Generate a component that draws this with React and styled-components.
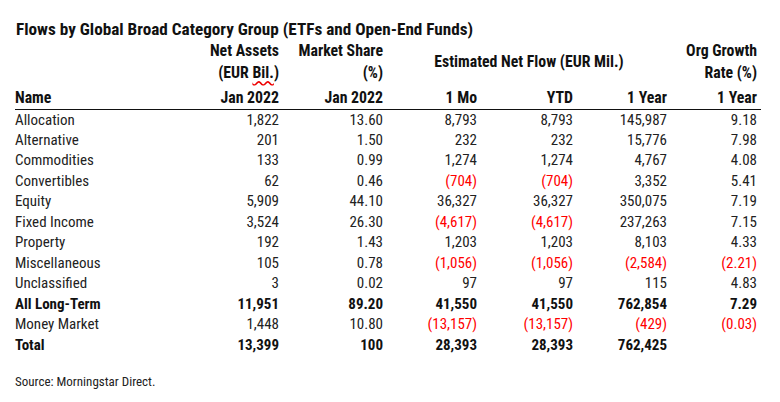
import React from 'react';
import styled, { createGlobalStyle } from 'styled-components';

const GlobalStyle = createGlobalStyle`
  html, body { margin: 0; padding: 0; background: #fff; }
  body {
    font-family: Roboto, "Liberation Sans", sans-serif;
    font-stretch: condensed;
    color: #1c1c1c;
  }
`;

const columns = [175, 93, 104, 94, 96, 94, 90];

const rows = [
  { name: 'Allocation', assets: '1,822', share: '13.60', mo: '8,793', ytd: '8,793', year: '145,987', growth: '9.18' },
  { name: 'Alternative', assets: '201', share: '1.50', mo: '232', ytd: '232', year: '15,776', growth: '7.98' },
  { name: 'Commodities', assets: '133', share: '0.99', mo: '1,274', ytd: '1,274', year: '4,767', growth: '4.08' },
  { name: 'Convertibles', assets: '62', share: '0.46', mo: '(704)', ytd: '(704)', year: '3,352', growth: '5.41' },
  { name: 'Equity', assets: '5,909', share: '44.10', mo: '36,327', ytd: '36,327', year: '350,075', growth: '7.19' },
  { name: 'Fixed Income', assets: '3,524', share: '26.30', mo: '(4,617)', ytd: '(4,617)', year: '237,263', growth: '7.15' },
  { name: 'Property', assets: '192', share: '1.43', mo: '1,203', ytd: '1,203', year: '8,103', growth: '4.33' },
  { name: 'Miscellaneous', assets: '105', share: '0.78', mo: '(1,056)', ytd: '(1,056)', year: '(2,584)', growth: '(2.21)' },
  { name: 'Unclassified', assets: '3', share: '0.02', mo: '97', ytd: '97', year: '115', growth: '4.83' },
  { name: 'All Long-Term', assets: '11,951', share: '89.20', mo: '41,550', ytd: '41,550', year: '762,854', growth: '7.29', bold: true },
  { name: 'Money Market', assets: '1,448', share: '10.80', mo: '(13,157)', ytd: '(13,157)', year: '(429)', growth: '(0.03)' },
  { name: 'Total', assets: '13,399', share: '100', mo: '28,393', ytd: '28,393', year: '762,425', growth: '', bold: true },
];

const isNeg = (v) => v.startsWith('(');

export default function App() {
  return (
    <>
      <GlobalStyle />
      <Page>
        <Title>Flows by Global Broad Category Group (ETFs and Open-End Funds)</Title>
        <Table>
          <colgroup>
            {columns.map((w, i) => <Col key={i} $w={w} />)}
          </colgroup>
          <thead>
            <HeadRow $h={22}>
              <Th />
              <Th>Net Assets</Th>
              <Th>Market Share</Th>
              <Th colSpan={3} rowSpan={2} $center>Estimated Net Flow (EUR Mil.)</Th>
              <Th>Org Growth</Th>
            </HeadRow>
            <HeadRow $h={22}>
              <Th />
              <Th>(EUR <Squiggle>Bil.</Squiggle>)</Th>
              <Th>(%)</Th>
              <Th>Rate (%)</Th>
            </HeadRow>
            <HeadRow $h={25} $rule>
              <Th $left $low>Name</Th>
              <Th $low>Jan 2022</Th>
              <Th $low>Jan 2022</Th>
              <Th $low>1 Mo</Th>
              <Th $low>YTD</Th>
              <Th $low>1 Year</Th>
              <Th $low>1 Year</Th>
            </HeadRow>
          </thead>
          <tbody>
            {rows.map((r) => (
              <Row key={r.name} $bold={r.bold}>
                <NameCell>{r.name}</NameCell>
                <Num>{r.assets}</Num>
                <Num>{r.share}</Num>
                <Num $neg={isNeg(r.mo)}>{r.mo}</Num>
                <Num $neg={isNeg(r.ytd)}>{r.ytd}</Num>
                <Num $neg={isNeg(r.year)}>{r.year}</Num>
                <Num $neg={isNeg(r.growth)}>{r.growth}</Num>
              </Row>
            ))}
          </tbody>
        </Table>
        <Source>Source: Morningstar Direct.</Source>
      </Page>
    </>
  );
}

const Page = styled.div`
  width: 780px;
  height: 402px;
  box-sizing: border-box;
  padding: 19px 0 0 15px;
`;

const Title = styled.div`
  font-size: 17.2px;
  font-weight: 700;
  line-height: 20px;
  color: #111;
  padding-left: 1px;
  margin-bottom: 1px;
`;

const Table = styled.table`
  border-collapse: collapse;
  table-layout: fixed;
  width: 746px;
`;

const Col = styled.col`
  width: ${(p) => p.$w}px;
`;

const HeadRow = styled.tr`
  height: ${(p) => p.$h}px;
  border-bottom: ${(p) => (p.$rule ? '1px solid #111' : 'none')};
`;

const Th = styled.th`
  padding: ${(p) => (p.$low ? '3px' : '0')} 4px 0 ${(p) => (p.$left ? '0' : '4px')};
  font-size: 15.8px;
  font-weight: 700;
  color: #111;
  white-space: nowrap;
  text-align: ${(p) => (p.$left ? 'left' : p.$center ? 'center' : 'right')};
  vertical-align: middle;
  line-height: 18px;
`;

const Squiggle = styled.span`
  text-decoration: underline wavy #e00;
  text-decoration-skip-ink: none;
  text-underline-offset: 2px;
`;

const Row = styled.tr`
  height: 20.5px;
  font-weight: ${(p) => (p.$bold ? 700 : 400)};
  color: ${(p) => (p.$bold ? '#111' : '#222')};
`;

const NameCell = styled.td`
  padding: 0;
  font-size: 15px;
  line-height: 18px;
  white-space: nowrap;
`;

const Num = styled.td`
  padding: 0 4px;
  font-size: 15px;
  line-height: 18px;
  text-align: right;
  white-space: nowrap;
  color: ${(p) => (p.$neg ? '#f00' : 'inherit')};
`;

const Source = styled.div`
  margin-top: 20px;
  font-size: 13px;
  line-height: 14px;
  color: #222;
`;
